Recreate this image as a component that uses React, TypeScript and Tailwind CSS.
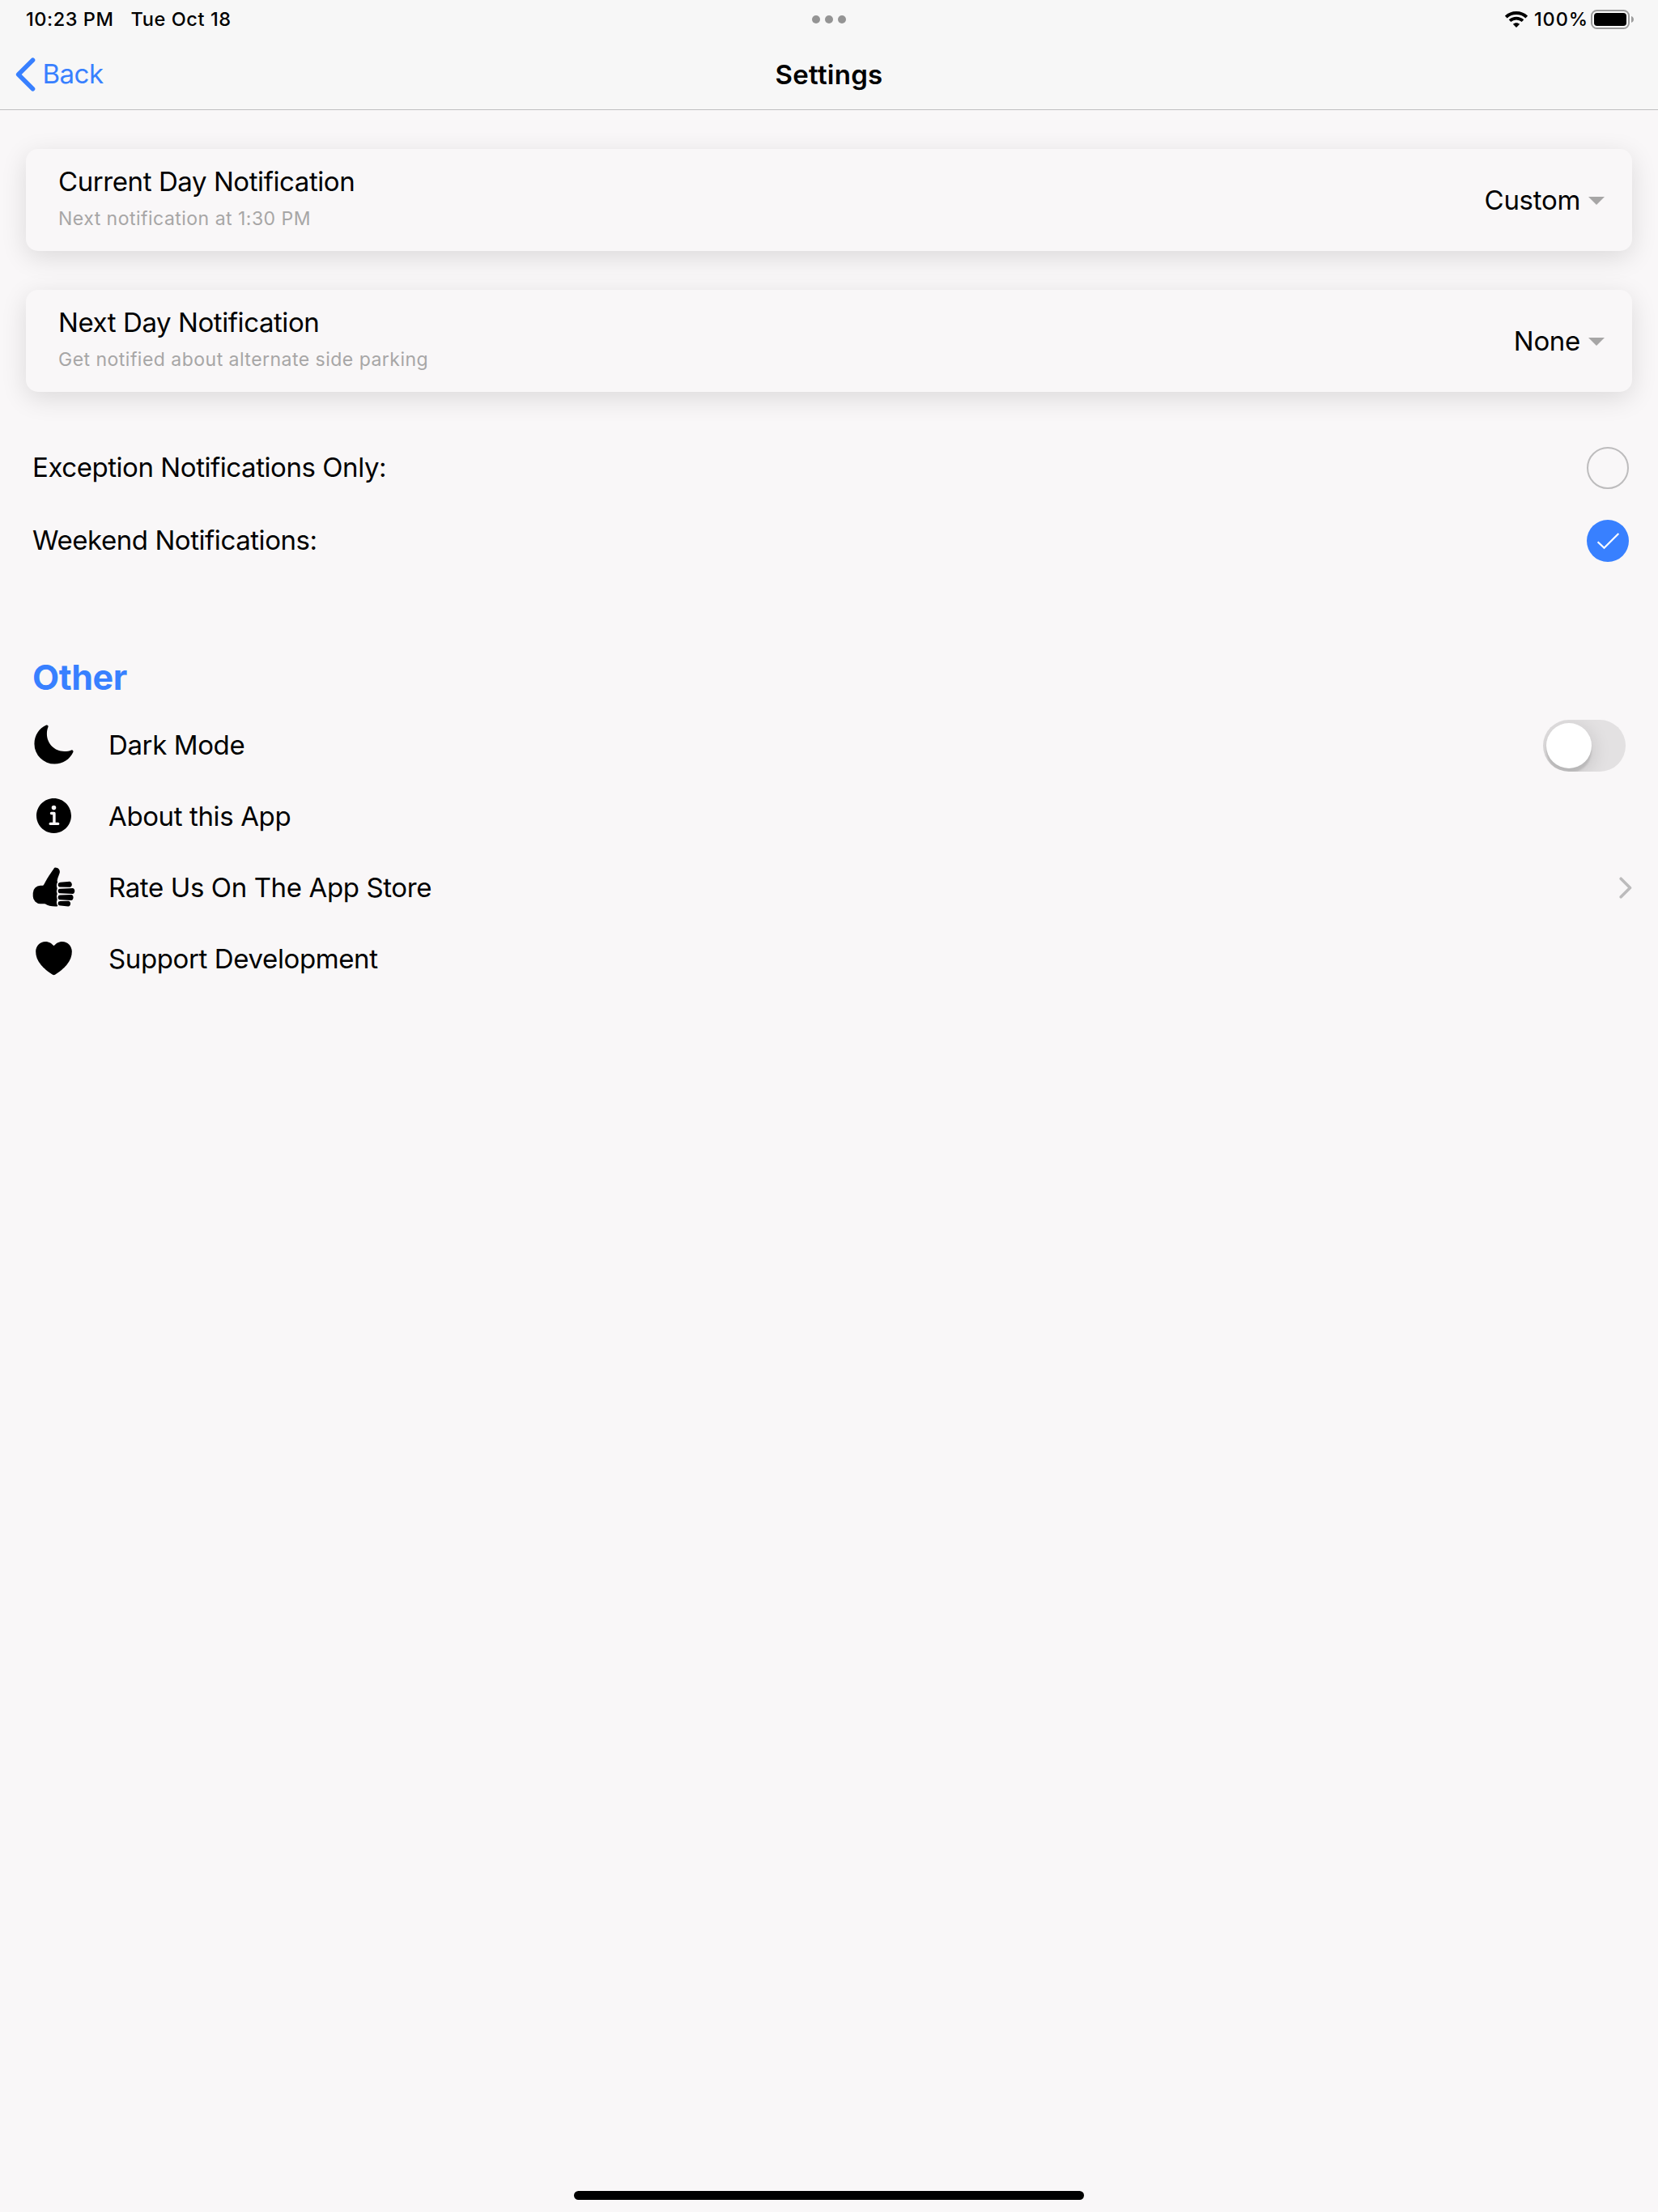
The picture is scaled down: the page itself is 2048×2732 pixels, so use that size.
import type { ReactNode } from "react";
import type { IconType } from "react-icons";
import { IoHeart, IoInformationCircle, IoMoon, IoThumbsUp } from "react-icons/io5";

function StatusBar() {
  return (
    <div className="grid h-12 grid-cols-3 items-center text-[23.5px] leading-none font-medium">
      <div className="flex gap-[21px] pb-px pl-8 whitespace-pre">
        <span className="tracking-[0.55px]">10:23 PM</span>
        <span className="tracking-[0.6px]">Tue Oct 18</span>
      </div>
      <div className="flex justify-center gap-1.5">
        <span className="size-2.5 rounded-full bg-[#949494]" />
        <span className="size-2.5 rounded-full bg-[#949494]" />
        <span className="size-2.5 rounded-full bg-[#949494]" />
      </div>
      <div className="flex items-center justify-end pr-[30px]">
        <svg width="28" height="20" viewBox="0 0 28 20" fill="none" stroke="#000">
          <path d="M1.300 7C8.300.3 19.700.3 26.700 7" strokeWidth="3.900" />
          <path d="M6 11.700c4.500-4.200 11.500-4.200 16 0" strokeWidth="3.700" />
          <path d="M14 20l-4.200-4.200c2.300-2.100 6.100-2.100 8.400 0z" fill="#000" stroke="none" />
        </svg>
        <span className="mr-[3px] ml-[8px] pb-px tracking-[0.9px]">100%</span>
        <svg width="53" height="24" viewBox="0 0 53 24">
          <rect x="1" y="1" width="46" height="22" rx="6.5" fill="none" stroke="#9c9c9c" strokeWidth="2" />
          <rect x="4" y="4" width="40" height="16" rx="3.8" fill="#000" />
          <path d="M50 8c1.800 .6 3 2.200 3 4s-1.200 3.400-3 4z" fill="#9c9c9c" />
        </svg>
      </div>
    </div>
  );
}

function NavBar() {
  return (
    <div className="grid h-[87px] grid-cols-3 items-center">
      <button className="flex items-center pl-[19px] text-[#3880ff]">
        <svg width="25" height="42" viewBox="0 0 25 42" fill="none" stroke="currentColor" strokeWidth="5.600" strokeLinecap="round" strokeLinejoin="round">
          <path d="M21.500 3.300L3.700 21l17.800 17.700" />
        </svg>
        <span className="ml-[8.5px] pb-0.5 tracking-[-0.5px]">Back</span>
      </button>
      <h1 className="text-center font-semibold tracking-[0.25px]">Settings</h1>
    </div>
  );
}

function SelectCard({ title, note, value }: { title: string; note: string; value: string }) {
  return (
    <section className="flex h-[126px] items-center justify-between rounded-[15px] bg-[#f9f7f8] pr-[34px] pl-10 shadow-[0_8px_32px_rgba(0,0,0,0.12)]">
      <div className="h-full pt-5">
        <h2 className="leading-10 tracking-[-0.42px]">{title}</h2>
        <p className="mt-2.5 text-[23px] leading-8 tracking-[0.48px] text-[#a7a6a6]">{note}</p>
      </div>
      <div className="flex items-center">
        <span className="tracking-[-0.3px]">{value}</span>
        <svg className="mt-0.5 ml-[10px]" width="20" height="10" viewBox="0 0 20 10">
          <path d="M0 0h20L10 10z" fill="#a7a6a6" />
        </svg>
      </div>
    </section>
  );
}

function CheckRow({ label, checked }: { label: string; checked?: boolean }) {
  return (
    <div className="flex h-[90px] items-center justify-between pr-9 pl-10">
      <span className="pb-0.5 tracking-[-0.44px]">{label}</span>
      {checked ? (
        <span className="flex size-[52px] items-center justify-center rounded-full bg-[#3880ff]">
          <svg width="52" height="52" viewBox="0 0 52 52" fill="none" stroke="#fff" strokeWidth="2.200">
            <path d="M13.600 27.200l7.900 7.600L39.300 17" />
          </svg>
        </span>
      ) : (
        <span className="size-[52px] rounded-full border-2 border-[#bdbcbd]" />
      )}
    </div>
  );
}

function Item({ icon: Icon, label, children }: { icon: IconType; label: string; children?: ReactNode }) {
  return (
    <li className="flex h-[88px] items-center pl-[39px]">
      <Icon size={55} className="mb-0.5" />
      <span className="ml-10 grow tracking-[-0.38px]">{label}</span>
      {children}
    </li>
  );
}

export default function App() {
  return (
    <div className="flex h-[2732px] w-[2048px] flex-col bg-[#f9f7f8] font-[Inter,sans-serif] text-[33px] leading-10 text-black">
      <header className="border-b border-[#bfbfc0] bg-[#f7f7f7]">
        <StatusBar />
        <NavBar />
      </header>

      <main className="grow">
        <div className="flex flex-col gap-12 px-8 pt-12">
          <SelectCard title="Current Day Notification" note="Next notification at 1:30 PM" value="Custom" />
          <SelectCard title="Next Day Notification" note="Get notified about alternate side parking" value="None" />
        </div>

        <div className="mt-[49px]">
          <CheckRow label="Exception Notifications Only:" />
          <CheckRow label="Weekend Notifications:" checked />
        </div>

        <h2 className="mt-[97px] mb-3.5 pl-10 text-[43px] leading-[52px] font-bold tracking-[-0.4px] text-[#3880ff]">Other</h2>
        <ul>
          <Item icon={IoMoon} label="Dark Mode">
            <span className="mt-0.5 mr-10 flex h-16 w-[102px] items-center overflow-hidden rounded-full bg-[#e3e1e2] pl-1">
              <span className="size-14 rounded-full bg-white shadow-[0_6px_24px_rgba(0,0,0,0.16),0_6px_2px_rgba(0,0,0,0.1)]" />
            </span>
          </Item>
          <Item icon={IoInformationCircle} label="About this App" />
          <Item icon={IoThumbsUp} label="Rate Us On The App Store">
            <svg className="mr-8" width="16" height="27" viewBox="0 0 16 27" fill="none" stroke="#bcbbbc" strokeWidth="3.600" strokeLinecap="round" strokeLinejoin="round">
              <path d="M2.200 2.200l11.300 11.300L2.200 24.800" />
            </svg>
          </Item>
          <Item icon={IoHeart} label="Support Development" />
        </ul>
      </main>

      <div className="mb-[15px] h-[11px] w-[630px] self-center rounded-full bg-black" />
    </div>
  );
}
